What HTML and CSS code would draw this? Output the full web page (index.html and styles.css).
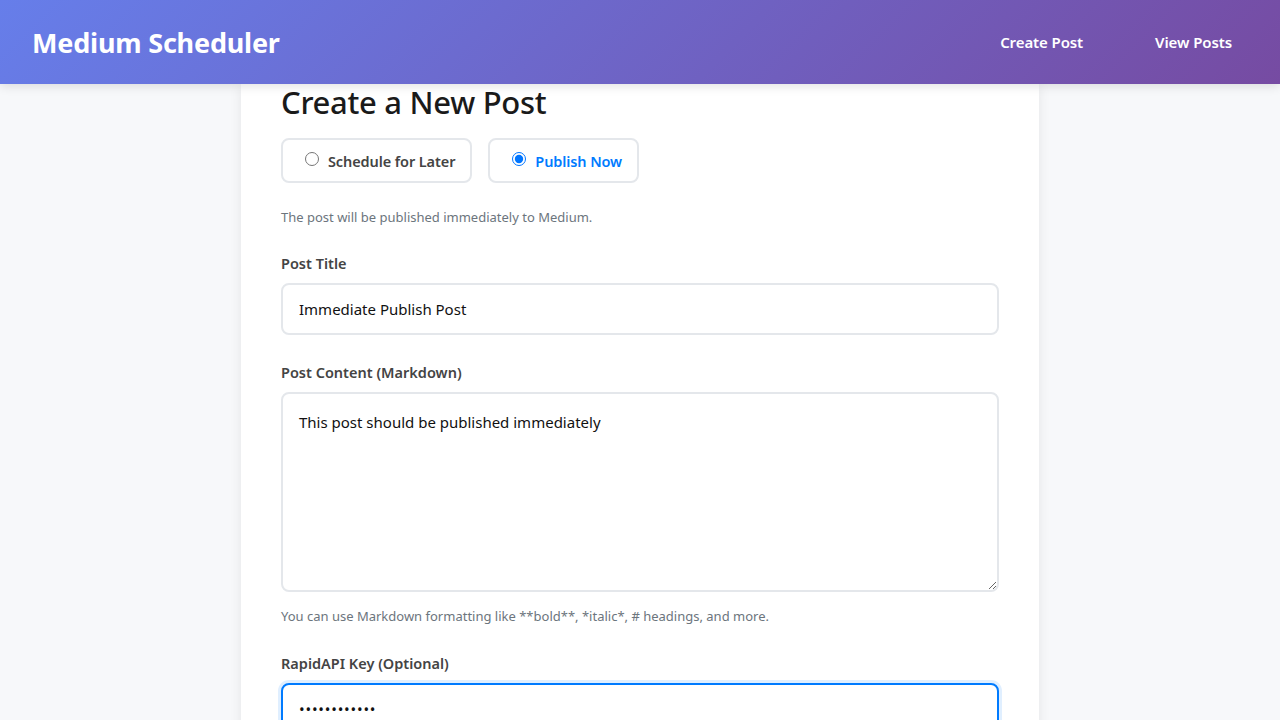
FILE: index.html
```html
<!DOCTYPE html>
<html lang="en">
<head>
<meta charset="utf-8">
<title>Medium Scheduler</title>
<link rel="stylesheet" href="styles.css">
</head>
<body>
<header class="site-header">
  <div class="brand">Medium Scheduler</div>
  <nav class="nav">
    <a href="#" class="nav-link">Create Post</a>
    <a href="#" class="nav-link">View Posts</a>
  </nav>
</header>
<main class="page">
  <section class="card">
    <h1 class="card-title">Create a New Post</h1>
    <div class="mode-options">
      <label class="mode-option"><input type="radio" name="mode"> <span>Schedule for Later</span></label>
      <label class="mode-option active"><input type="radio" name="mode" checked> <span>Publish Now</span></label>
    </div>
    <p class="help help-mode">The post will be published immediately to Medium.</p>

    <div class="form-group">
      <label class="field-label" for="title">Post Title</label>
      <input class="field" id="title" type="text" value="Immediate Publish Post">
    </div>

    <div class="form-group">
      <label class="field-label" for="content">Post Content (Markdown)</label>
      <textarea class="field field-area" id="content">This post should be published immediately</textarea>
      <p class="help help-below">You can use Markdown formatting like **bold**, *italic*, # headings, and more.</p>
    </div>

    <div class="form-group">
      <label class="field-label" for="key">RapidAPI Key (Optional)</label>
      <input class="field field-secret" id="key" type="password" value="abcdefghijkl">
    </div>
  </section>
</main>
<script src="script.js"></script>
</body>
</html>
```

FILE: styles.css
```css
* { box-sizing: border-box; }
html, body { margin: 0; padding: 0; }
body {
  font-family: "Noto Sans", "Open Sans", sans-serif;
  background: #f7f8fa;
  color: #222;
  height: 720px;
  overflow: hidden;
}
.site-header {
  position: relative;
  z-index: 2;
  height: 84px;
  padding: 0 32px;
  display: flex;
  align-items: center;
  justify-content: space-between;
  background: linear-gradient(135deg, #667eea 0%, #764ba2 100%);
  box-shadow: 0 2px 10px rgba(0,0,0,0.12);
}
.brand {
  color: #fff;
  font-size: 27px;
  font-weight: 700;
  letter-spacing: -0.2px;
}
.nav { display: flex; gap: 40px; }
.nav-link {
  color: #fff;
  text-decoration: none;
  font-size: 15px;
  font-weight: 600;
  padding: 8px 16px;
  letter-spacing: -0.1px;
}
.page {
  display: flex;
  justify-content: center;
}
.card {
  width: 798px;
  background: #fff;
  padding: 0 40px 40px;
  box-shadow: 0 2px 12px rgba(0,0,0,0.08);
}
.card-title {
  margin: 0 0 17px;
  font-size: 31px;
  line-height: 37px;
  font-weight: 500;
  color: #1a1a1a;
  letter-spacing: -0.3px;
}
.mode-options { display: flex; gap: 16px; }
.mode-option {
  display: flex;
  align-items: center;
  gap: 6px;
  height: 45px;
  padding: 0 15px 0 16px;
  border: 2px solid #e4e7eb;
  border-radius: 8px;
  font-size: 14.5px;
  font-weight: 600;
  color: #444;
  letter-spacing: -0.1px;
}
.mode-option input { margin: 0 3px 3px 6px; width: 14px; height: 14px; }
.mode-option.active { color: #007bff; }
.help {
  margin: 0;
  font-size: 13px;
  line-height: 20px;
  color: #6c757d;
}
.help-mode { margin: 24px 0 26px; }
.help-below { margin-top: 14px; }
.form-group { margin-bottom: 27px; }
.field-label {
  display: block;
  font-size: 14.5px;
  line-height: 20px;
  font-weight: 600;
  color: #444;
  margin-bottom: 10px;
}
.field {
  display: block;
  width: 100%;
  height: 52px;
  padding: 0 16px;
  border: 2px solid #e4e7eb;
  border-radius: 8px;
  font-family: inherit;
  font-size: 15px;
  color: #111;
  background: #fff;
  outline: none;
}
.field-area {
  height: 200px;
  padding: 16px;
  line-height: 24px;
  resize: vertical;
}
.field-secret { letter-spacing: 0.8px; }
.field:focus {
  border-color: #007bff;
  box-shadow: 0 0 0 3px rgba(0,123,255,0.12);
}
```

FILE: script.js
```js
var k = document.getElementById('key');
k.focus();
k.setSelectionRange(k.value.length, k.value.length);
```
